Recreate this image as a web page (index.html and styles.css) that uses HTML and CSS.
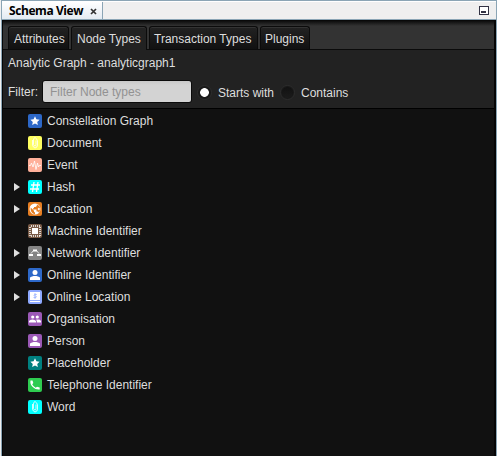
FILE: index.html
```html
<!DOCTYPE html>
<html lang="en">
<head>
<meta charset="utf-8">
<title>Schema View</title>
<link rel="stylesheet" href="styles.css">
</head>
<body>
<div class="window">
  <header class="titlebar">
    <div class="doc-tab"><span>Schema View</span><svg class="close" width="7" height="7" viewBox="0 0 7 7"><path d="M1 1l5 5M6 1L1 6"/></svg></div>
    <button class="minimise" aria-label="Minimise"></button>
  </header>
  <main class="panel">
    <nav class="tabs">
      <div class="tab attributes">Attributes</div>
      <div class="tab nodes selected">Node Types</div>
      <div class="tab transactions">Transaction Types</div>
      <div class="tab plugins">Plugins</div>
    </nav>
    <section class="tools">
      <div class="graph-name">Analytic Graph - analyticgraph1</div>
      <div class="filter">
        <label class="filter-label" for="f">Filter:</label>
        <input id="f" class="field" placeholder="Filter Node types">
        <span class="radio on"></span><span class="option starts">Starts with</span>
        <span class="radio"></span><span class="option">Contains</span>
      </div>
    </section>
    <ul class="tree">
      <li><i></i><svg class="icon blue" viewBox="0 0 14 14"><path class="f" d="M7 2.300l1.400 3 3.200.4-2.400 2.200.7 3.200L7 9.500l-2.900 1.600.7-3.200-2.400-2.200 3.200-.4z"/></svg><span>Constellation Graph</span></li>
      <li><i></i><svg class="icon yellow" viewBox="0 0 14 14"><path class="s thin" d="M4.500 4v5q.5 2.500 2.500 3 2.500-.5 2.500-3V5Q9 2.500 7 1.500 5.500 2 5.500 4v4.500q.5 1.500 1.500 1.500t1-1.500V4.500"/></svg><span>Document</span></li>
      <li><i></i><svg class="icon salmon" viewBox="0 0 14 14"><path class="s thin" d="M1 7.500h1.500l1-2.500 1.500 4L6.500 3 8 11.500 9.500 5l1 4 .8-1.500H13"/></svg><span>Event</span></li>
      <li><i class="arrow"></i><svg class="icon cyan" viewBox="0 0 14 14"><path class="s" d="M6 2L4.500 12M10 2L8.500 12M3 5h9M2 9h9"/></svg><span>Hash</span></li>
      <li><i class="arrow"></i><svg class="icon orange" viewBox="0 0 14 14"><circle class="f" cx="7" cy="7" r="5.500"/><path class="o" d="M2.700 5.500L6 8.700v1l1 .8v1.800Q2 11 2.700 5.500zM8.800 2.500V4L7.500 5H6v1.300H5v1.200h3.500v2H10l1 1.300Q13 8 12 5q-1-2-3.200-2.500z"/><path class="f" d="M11 5.500l1 1.500-1 1.500L9.500 7z"/></svg><span>Location</span></li>
      <li><i></i><svg class="icon brown" viewBox="0 0 14 14"><path class="f" d="M4 4h6v6H4z"/><path class="s dash" d="M3 2h9M3 12h9M2 3v9M12 3v9"/></svg><span>Machine Identifier</span></li>
      <li><i class="arrow"></i><svg class="icon grey" viewBox="0 0 14 14"><path class="s thin" d="M3 7.500l2.500-3M8.500 4.500l2.500 3"/><path class="f" d="M5 3.500h4v2H5zM1 8h4v2H1zM9 8h4v2H9z"/></svg><span>Network Identifier</span></li>
      <li><i class="arrow"></i><svg class="icon blue" viewBox="0 0 14 14"><circle class="f" cx="7" cy="4.500" r="2.500"/><path class="f" d="M2 12V9.500q1-1 3.500-1.500h3q2.500.5 3.500 1.500V12z"/></svg><span>Online Identifier</span></li>
      <li><i class="arrow"></i><svg class="icon peri" viewBox="0 0 14 14"><path class="f" d="M2 2h10v8H2zM2 11h10v1H2z"/><path class="p" d="M8.800 4.500H6.500q-1 1 0 1.500h1.500q1 .5 0 1.500H5.500M7 3v6"/></svg><span>Online Location</span></li>
      <li><i></i><svg class="icon purple" viewBox="0 0 14 14"><circle class="f" cx="4.700" cy="5" r="1.600"/><circle class="f" cx="9.300" cy="5" r="1.600"/><path class="f" d="M1 10.500V9q1-1.500 3.500-1.500T8 9v1.500zM8.800 10.500V9l-.8-1.300q4-.7 5 1.300v1.500z"/></svg><span>Organisation</span></li>
      <li><i></i><svg class="icon purple" viewBox="0 0 14 14"><circle class="f" cx="7" cy="4.500" r="2.500"/><path class="f" d="M2 12V9.500q1-1 3.500-1.500h3q2.500.5 3.500 1.500V12z"/></svg><span>Person</span></li>
      <li><i></i><svg class="icon teal" viewBox="0 0 14 14"><path class="f" d="M7 2.300l1.400 3 3.200.4-2.400 2.200.7 3.200L7 9.500l-2.900 1.600.7-3.200-2.400-2.200 3.200-.4z"/></svg><span>Placeholder</span></li>
      <li><i></i><svg class="icon green" viewBox="0 0 14 14"><path class="f" d="M2.500 2.500h2L5.300 5 4.200 6.200q1.200 2.400 3.500 3.500L9 8.700l2.700.8v2q-4 .5-7-2.500t-2.200-6.500z"/></svg><span>Telephone Identifier</span></li>
      <li><i></i><svg class="icon cyan" viewBox="0 0 14 14"><path class="s thin" d="M4.500 4v5q.5 2.500 2.500 3 2.500-.5 2.500-3V5Q9 2.500 7 1.500 5.500 2 5.500 4v4.500q.5 1.500 1.500 1.500t1-1.500V4.500"/></svg><span>Word</span></li>
    </ul>
  </main>
</div>
</body>
</html>
```
FILE: styles.css
```css
* { box-sizing: border-box; }
body { margin: 0; background: #f0f0f0; overflow: hidden; font: 12px/14px "Liberation Sans", Arial, sans-serif; color: #dedede; }
.window { height: 456px; margin-left: 1px; border: solid #8ba5b5; border-width: 1px 1px 0 1px; display: flex; flex-direction: column; }
.titlebar { height: 19px; flex: none; display: flex; justify-content: space-between; background: #efefef; border-top: 1px solid #fff; border-bottom: 1px solid #8ba5b5; }
.doc-tab { width: 101px; height: 17px; display: flex; align-items: center; padding-left: 7px; border-right: 1px solid #8ba5b5; background: linear-gradient(#fff, #e4ebf2); color: #000; font: bold 12px/17px "Open Sans", sans-serif; letter-spacing: -.42px; white-space: nowrap; }
.close { margin: 1px 0 0 7px; stroke: #333; stroke-width: 1.700; }
.minimise { width: 10px; height: 9px; margin: 4px 7px 0 0; padding: 0; border: 1px solid #334; background: linear-gradient(#334, #334) 1px 4px / 5px 2px no-repeat #fff; }
.panel { flex: 1; display: flex; flex-direction: column; border: solid #050505; border-width: 0 2px 0 1px; background: #111; min-height: 0; }
.tabs { height: 30px; flex: none; display: flex; gap: 2px; padding: 6px 0 0 5px; background: linear-gradient(#050505, #151515 2px, #333 6px); border-bottom: 1px solid #0b0b0b; }
.tab { height: 23px; padding: 5px 0 0 5px; white-space: nowrap; border: 1px solid #0b0b0b; border-bottom: 0; border-radius: 3px 3px 0 0; background: linear-gradient(#222, #111); box-shadow: inset 0 1px #333; line-height: 14px; }
.tab.selected { height: 24px; background: #222; }
.attributes { width: 61px; }
.nodes { width: 76px; }
.transactions { width: 109px; padding-left: 4px; }
.plugins { width: 50px; padding-left: 4px; }
.tools { height: 59px; flex: none; background: #222; border-bottom: 1px solid #000; padding: 6px 0 0 5px; }
.graph-name { height: 24px; }
.filter { display: flex; align-items: center; height: 23px; }
.filter-label { width: 34px; }
.field { width: 150px; height: 23px; border: 1px solid #0b0b0b; border-radius: 3px; background: linear-gradient(#c8c8c8, #d3d3d3 4px); padding: 0 0 0 7px; font: inherit; }
.field::placeholder { color: #929292; opacity: 1; }
.radio { width: 15px; height: 15px; margin: 1px 6px 0 5px; border: 1px solid #2c2c2c; border-radius: 50%; background: linear-gradient(#111, #1c1c1c); box-shadow: inset 0 0 0 1px #1a1a1a; }
.radio.on { background: radial-gradient(circle, #fff 4px, #1b1b1b 4.700px); }
.option { padding-top: 2px; }
.starts { width: 57px; }
.tree { list-style: none; margin: 0; padding: 1px 0 0 11px; }
.tree li { height: 22px; display: flex; align-items: center; }
.tree i { width: 14px; height: 8px; flex: none; }
.arrow::before { content: ""; display: block; width: 0; border: solid transparent; border-width: 4px 0 4px 6px; border-left-color: #dedede; }
.icon { width: 14px; height: 14px; margin-right: 5px; border-radius: 2px; }
.f { fill: #fff; }
.s { fill: none; stroke: #fff; stroke-width: 1.300; }
.s.thin { stroke-width: .8; }
.s.dash { stroke-width: 1.500; stroke-dasharray: 1 1; }
.o { fill: #e67e22; }
.p { fill: none; stroke: #9ab3ff; stroke-width: .8; }
.blue { background: #2d68c8; }
.yellow { background: #ffff60; }
.salmon { background: #ffb09a; }
.cyan { background: #00ffff; }
.orange { background: #e67e22; }
.brown { background: #7a5c48; }
.grey { background: #858585; }
.peri { background: #8faaff; }
.purple { background: #9b59b6; }
.teal { background: #008080; }
.green { background: #2ecc50; }
```
